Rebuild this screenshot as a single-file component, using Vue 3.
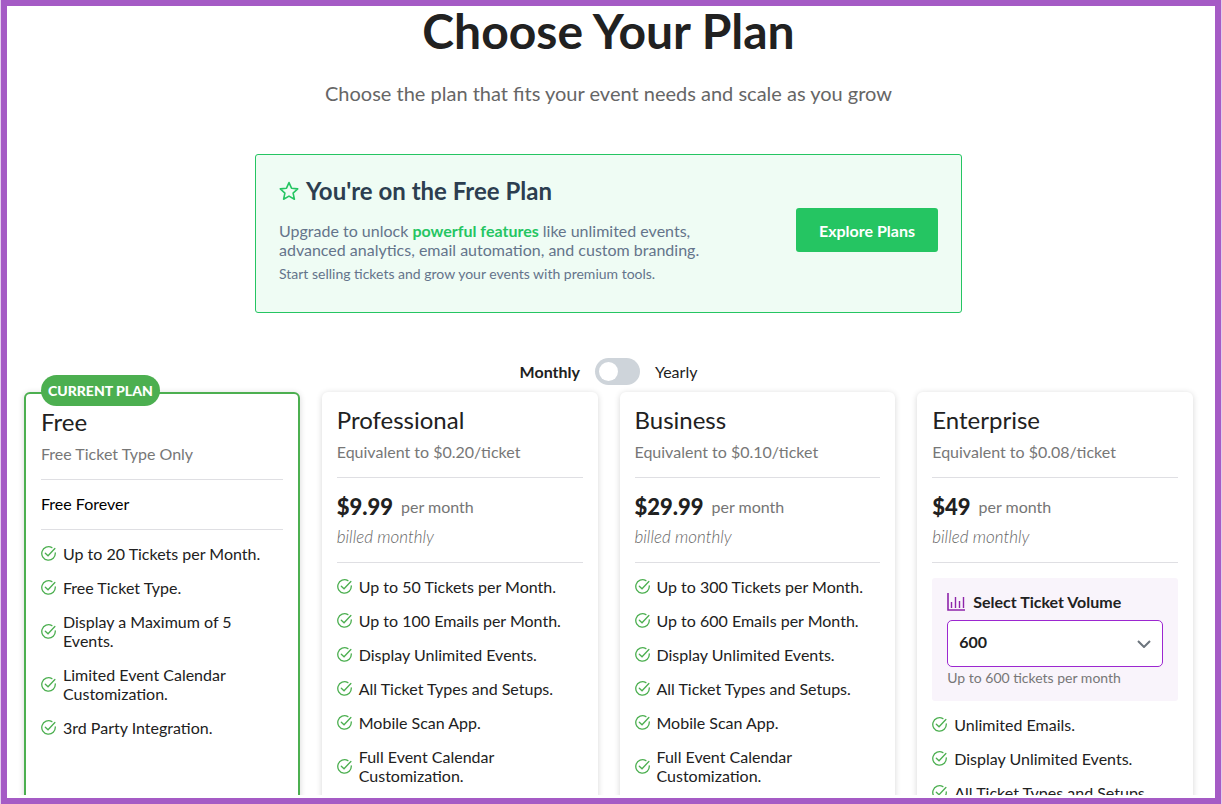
<script setup>
import { ref } from 'vue'

const yearly = ref(false)
const volume = ref('600')

const plans = [
  {
    name: 'Free',
    note: 'Free Ticket Type Only',
    current: true,
    features: [
      'Up to 20 Tickets per Month.',
      'Free Ticket Type.',
      'Display a Maximum of 5 Events.',
      'Limited Event Calendar Customization.',
      '3rd Party Integration.'
    ]
  },
  {
    name: 'Professional',
    note: 'Equivalent to $0.20/ticket',
    price: '$9.99',
    features: [
      'Up to 50 Tickets per Month.',
      'Up to 100 Emails per Month.',
      'Display Unlimited Events.',
      'All Ticket Types and Setups.',
      'Mobile Scan App.',
      'Full Event Calendar Customization.'
    ]
  },
  {
    name: 'Business',
    note: 'Equivalent to $0.10/ticket',
    price: '$29.99',
    features: [
      'Up to 300 Tickets per Month.',
      'Up to 600 Emails per Month.',
      'Display Unlimited Events.',
      'All Ticket Types and Setups.',
      'Mobile Scan App.',
      'Full Event Calendar Customization.'
    ]
  },
  {
    name: 'Enterprise',
    note: 'Equivalent to $0.08/ticket',
    price: '$49',
    volume: true,
    features: ['Unlimited Emails.', 'Display Unlimited Events.', 'All Ticket Types and Setups.']
  }
]
</script>

<template>
  <div class="frame">
    <main class="page">
      <h1>Choose Your Plan</h1>
      <p class="lead">Choose the plan that fits your event needs and scale as you grow</p>

      <section class="banner">
        <div class="banner-text">
          <h2>
            <svg class="star" viewBox="0 0 20 20" aria-hidden="true">
              <path d="M10 1.6l2.5 5.6 6.2.7-4.6 4.2 1.3 6.1L10 15.1l-5.4 3.1 1.3-6.1L1.3 7.9l6.2-.7z" />
            </svg>
            <span>You're on the Free Plan</span>
          </h2>
          <p class="pitch">
            Upgrade to unlock <strong>powerful features</strong> like unlimited events, advanced
            analytics, email automation, and custom branding.
          </p>
          <p class="small">Start selling tickets and grow your events with premium tools.</p>
        </div>
        <button type="button" class="explore">Explore Plans</button>
      </section>

      <div class="billing">
        <span :class="{ active: !yearly }">Monthly</span>
        <input v-model="yearly" type="checkbox" role="switch" class="switch" aria-label="Bill yearly" />
        <span :class="{ active: yearly }">Yearly</span>
      </div>

      <div class="plans">
        <article v-for="plan in plans" :key="plan.name" class="card" :class="{ current: plan.current }">
          <span v-if="plan.current" class="badge">CURRENT PLAN</span>
          <h3>{{ plan.name }}</h3>
          <p class="note">{{ plan.note }}</p>
          <hr />
          <template v-if="plan.price">
            <p class="price"><strong>{{ plan.price }}</strong><span>per month</span></p>
            <p class="billed">billed monthly</p>
          </template>
          <p v-else class="forever">Free Forever</p>
          <hr />
          <div v-if="plan.volume" class="volume">
            <label for="volume">
              <svg viewBox="0 0 18 18" aria-hidden="true">
                <path class="axis" d="M1 0v17h17" />
                <path d="M4.5 9v6M8.5 4v11M12.5 8v7M16.5 4v11" />
              </svg>
              <span>Select Ticket Volume</span>
            </label>
            <div class="select">
              <select id="volume" v-model="volume">
                <option>600</option>
                <option>1000</option>
                <option>2000</option>
              </select>
              <svg viewBox="0 0 14 8" aria-hidden="true"><path d="M1 1l6 6 6-6" /></svg>
            </div>
            <p>Up to {{ volume }} tickets per month</p>
          </div>
          <ul>
            <li v-for="item in plan.features" :key="item">
              <svg viewBox="0 0 16 16" aria-hidden="true">
                <path d="M15.2 7.3A7.2 7.2 0 1 1 11.6 1.7" />
                <path d="M4.6 7.7l2.9 2.7 7.3-7.8" />
              </svg>
              <span>{{ item }}</span>
            </li>
          </ul>
        </article>
      </div>
    </main>
  </div>
</template>

<style>
body {
  margin: 0;
  background: #e3cdee;
}
</style>

<style scoped>
* {
  box-sizing: border-box;
}

h1,
h2,
h3,
p,
ul {
  margin: 0;
  padding: 0;
}

.frame {
  height: 100vh;
  margin: 0 1px;
  border: 6px solid #a55bc5;
  padding-bottom: 3px;
  background: #fff;
  font-family: Lato, sans-serif;
  font-size: 16px;
  line-height: 20px;
  color: #212121;
}

.page {
  height: 100%;
  overflow: hidden;
  padding: 0 22px 0 17px;
}

h1 {
  font-size: 48px;
  font-weight: 700;
  line-height: 50px;
  text-align: center;
}

.lead {
  margin-top: 23px;
  font-size: 20px;
  line-height: 28px;
  color: #666;
  text-align: center;
}

.banner {
  display: flex;
  align-items: center;
  justify-content: space-between;
  max-width: 707px;
  margin: 47px auto 0;
  padding: 22px 23px 24px;
  border: 1px solid #25c562;
  border-radius: 3px;
  background: #effcf4;
  color: #64748b;
}

.banner-text {
  max-width: 450px;
}

h2 {
  display: flex;
  align-items: center;
  gap: 7px;
  font-size: 24px;
  font-weight: 700;
  line-height: 28px;
  color: #2c3e50;
}

.star {
  width: 20px;
  height: 20px;
  fill: none;
  stroke: #25c562;
  stroke-width: 1.6;
  stroke-linejoin: round;
}

.pitch {
  margin-top: 16px;
  line-height: 19px;
}

.pitch strong {
  color: #25c562;
}

.small {
  margin: 5px 0;
  font-size: 14px;
  line-height: 19px;
}

.explore {
  height: 44px;
  margin-bottom: 5px;
  padding: 0 23px;
  border: 0;
  border-radius: 3px;
  background: #25c562;
  font: 700 16px Lato, sans-serif;
  color: #fff;
}

.billing {
  display: flex;
  align-items: center;
  justify-content: center;
  gap: 15px;
  margin-top: 45px;
}

.billing .active {
  font-weight: 700;
}

.switch {
  appearance: none;
  display: flex;
  align-items: center;
  width: 45px;
  height: 27px;
  margin: 0;
  padding: 0 4px;
  border-radius: 14px;
  background: #ced4da;
}

.switch::before {
  content: '';
  width: 19px;
  height: 19px;
  border-radius: 50%;
  background: #fff;
}

.switch:checked {
  justify-content: flex-end;
  background: #4caf50;
}

.plans {
  display: grid;
  grid-template-columns: repeat(4, minmax(0, 1fr));
  gap: 22px;
  margin-top: 7px;
}

.card {
  position: relative;
  min-height: 520px;
  padding: 14px 15px;
  border-radius: 6px;
  background: #fff;
  box-shadow: 0 1px 6px rgba(0, 0, 0, 0.16);
}

.current {
  border: 2px solid #4caf50;
}

.badge {
  position: absolute;
  top: -19px;
  left: 15px;
  padding: 0 7px;
  border-radius: 16px;
  background: #4caf50;
  font-size: 14px;
  font-weight: 900;
  line-height: 31px;
  color: #fff;
  white-space: nowrap;
}

h3 {
  font-size: 24px;
  font-weight: 400;
  line-height: 28px;
}

.note {
  margin-top: 8px;
  color: #777;
}

hr {
  height: 1px;
  margin: 15px 0 14px;
  border: 0;
  background: #dfdfe3;
}

.price {
  display: flex;
  align-items: center;
  gap: 8px;
  line-height: 30px;
}

.price strong {
  font-size: 22px;
  font-weight: 900;
}

.price span {
  color: #757575;
}

.billed {
  margin-top: 5px;
  font-size: 17px;
  font-style: italic;
  font-weight: 300;
  color: #666;
}

.forever {
  color: #000;
}

ul {
  display: flex;
  flex-direction: column;
  gap: 15px;
  margin-top: 14px;
  list-style: none;
}

li {
  display: flex;
  align-items: center;
  gap: 7px;
  line-height: 19px;
}

li svg {
  flex: none;
  width: 15px;
  height: 15px;
  fill: none;
  stroke: #4caf50;
  stroke-width: 1.4;
  stroke-linecap: round;
}

.volume {
  margin-top: 15px;
  padding: 14px 15px;
  border-radius: 3px;
  background: #f9f4fb;
}

.volume label {
  display: flex;
  align-items: center;
  gap: 8px;
  font-weight: 700;
}

.volume label svg {
  width: 18px;
  height: 18px;
  fill: none;
  stroke: #8e24aa;
  stroke-width: 1.4;
}

.volume label .axis {
  stroke-width: 1.6;
}

.select {
  display: grid;
  align-items: center;
  margin-top: 8px;
}

.select select,
.select svg {
  grid-area: 1 / 1;
}

.select select {
  appearance: none;
  width: 100%;
  height: 47px;
  padding: 0 11px 5px;
  border: 1px solid #9c27d0;
  border-radius: 5px;
  background: #fff;
  font: 700 16px Lato, sans-serif;
  color: #212121;
}

.select svg {
  justify-self: end;
  width: 14px;
  height: 8px;
  margin-right: 12px;
  fill: none;
  stroke: #6c757d;
  stroke-width: 2;
  pointer-events: none;
}

.volume p {
  margin-top: 1px;
  font-size: 14px;
  line-height: 19px;
  color: #777;
}
</style>
